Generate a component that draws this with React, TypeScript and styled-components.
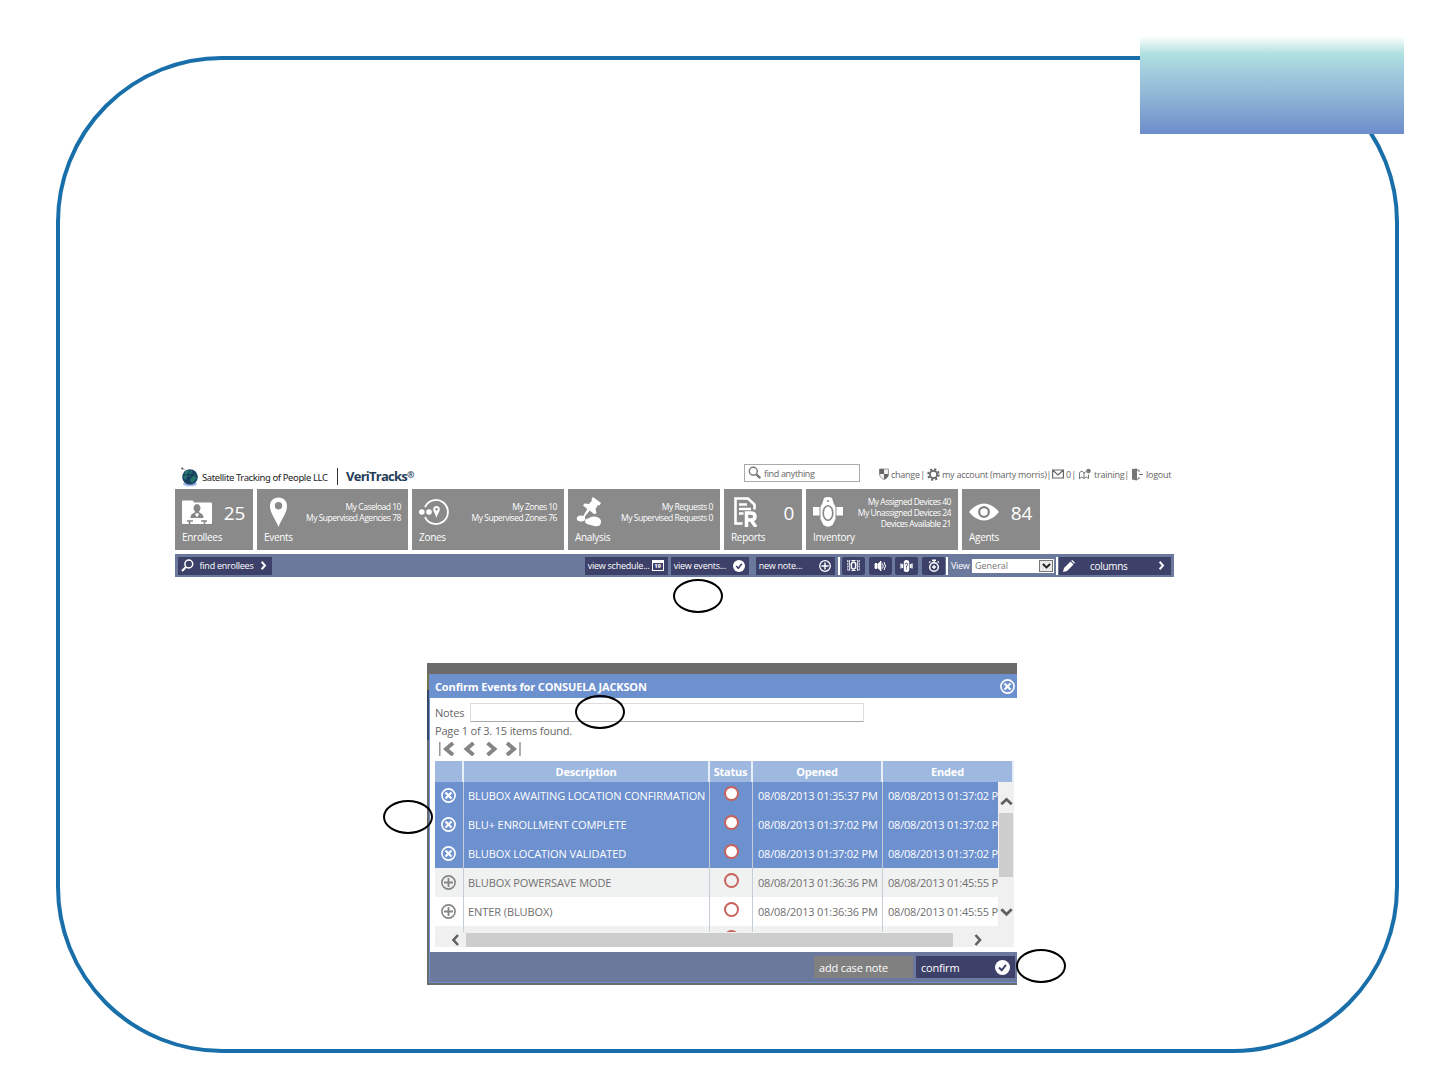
import React from "react";
import styled, { createGlobalStyle } from "styled-components";

const events = [
  { name: "BLUBOX AWAITING LOCATION CONFIRMATION", opened: "08/08/2013 01:35:37 PM", ended: "08/08/2013 01:37:02 PM", selected: true },
  { name: "BLU+ ENROLLMENT COMPLETE", opened: "08/08/2013 01:37:02 PM", ended: "08/08/2013 01:37:02 PM", selected: true },
  { name: "BLUBOX LOCATION VALIDATED", opened: "08/08/2013 01:37:02 PM", ended: "08/08/2013 01:37:02 PM", selected: true },
  { name: "BLUBOX POWERSAVE MODE", opened: "08/08/2013 01:36:36 PM", ended: "08/08/2013 01:45:55 PM", selected: false },
  { name: "ENTER (BLUBOX)", opened: "08/08/2013 01:36:36 PM", ended: "08/08/2013 01:45:55 PM", selected: false },
  { name: "", opened: "", ended: "", selected: false },
];

const tiles = [
  { label: "Enrollees", width: 78, icon: <FolderIcon />, count: "25" },
  { label: "Events", width: 151, icon: <PinIcon />, lines: ["My Caseload 10", "My Supervised Agencies 78"] },
  { label: "Zones", width: 152, icon: <ZoneIcon />, lines: ["My Zones 10", "My Supervised Zones 76"] },
  { label: "Analysis", width: 152, icon: <PushpinIcon />, lines: ["My Requests 0", "My Supervised Requests 0"] },
  { label: "Reports", width: 78, icon: <ReportIcon />, count: "0" },
  { label: "Inventory", width: 152, icon: <DeviceIcon />, lines: ["My Assigned Devices 40", "My Unassigned Devices 24", "Devices Available 21"] },
  { label: "Agents", width: 78, icon: <EyeIcon />, count: "84" },
];

export default function App() {
  return (
    <Page>
      <GlobalStyle />
      <Frame>
        <Dashboard>
          <TopBar />
          <Tiles>
            {tiles.map((t) => (
              <Tile key={t.label} $width={t.width}>
                <TileTop>
                  {t.icon}
                  {t.count && <Count>{t.count}</Count>}
                  {t.lines && (
                    <Lines $three={t.lines.length === 3}>
                      {t.lines.map((l) => <span key={l}>{l}</span>)}
                    </Lines>
                  )}
                </TileTop>
                <TileLabel>{t.label}</TileLabel>
              </Tile>
            ))}
          </Tiles>
          <ActionBar />
        </Dashboard>
        <ConfirmDialog />
      </Frame>
      <Banner />
      <Callout $x={673} $y={579} />
      <Callout $x={575} $y={695} />
      <Callout $x={383} $y={800} />
      <Callout $x={1016} $y={949} />
    </Page>
  );
}

function TopBar() {
  return (
    <Header>
      <GlobeIcon />
      <Company>Satellite Tracking of People LLC</Company>
      <Brand>VeriTracks<sup>®</sup></Brand>
      <SearchBox>
        <svg width="14" height="14" viewBox="0 0 14 14" fill="none" stroke="#777">
          <circle cx="5.3" cy="5.3" r="4" strokeWidth="1.4" />
          <path d="M8.3 8.3l4 3.8" strokeWidth="2.3" />
        </svg>
        find anything
      </SearchBox>
      <Account>
        <svg width="10" height="12" viewBox="0 0 10 12">
          <path d="M.5 1h9v5c0 3-2 4.500-4.500 5.500C2.500 10.500.5 9 .5 6z" fill="#eee" stroke="#888" strokeWidth=".8" />
          <path d="M.5 1H5v5H.5zM5 6h4.500c0 3-2 4.500-4.500 5.500z" fill="#666" />
        </svg>
        <Item $width={34}><span>change</span><span>|</span></Item>
        <svg width="13" height="13" viewBox="0 0 14 14" fill="none" stroke="#666">
          <circle cx="7" cy="7" r="3.900" strokeWidth="2" />
          <circle cx="7" cy="7" r="5.800" strokeWidth="1.900" strokeDasharray="2.400 2.155" />
        </svg>
        <Item $width={108}><span>my account (marty morris)</span><span>|</span></Item>
        <svg width="12" height="10" viewBox="0 0 12 10" fill="none" stroke="#666" strokeWidth="1.200">
          <path d="M.6 1h10.800v8H.6zM.8 1.200L6 6l5.200-4.800" />
        </svg>
        <Item $width={10}><span>0</span><span>|</span></Item>
        <svg width="14" height="12" viewBox="0 0 14 12" fill="none" stroke="#777">
          <path d="M1.500 11V4.500L4 3l2 2v5.500M1.500 10.500L4 9l2 1.500L8.500 9l2 1.500V6.500M6 5l2-1.500" />
          <circle cx="10.500" cy="3" r="2.300" fill="#777" stroke="none" />
        </svg>
        <Item $width={35}><span>training</span><span>|</span></Item>
        <svg width="13" height="13" viewBox="0 0 13 13">
          <path d="M1 1l5-.5v12L1 11.500z" fill="#777" />
          <path d="M6 2h2v2M8 9v2H6M8 6.500h4" fill="none" stroke="#777" />
        </svg>
        <Item $width={26}>logout</Item>
      </Account>
    </Header>
  );
}

function ActionBar() {
  return (
    <Bar>
      <BarButton $width={94} $gap={0}>
        <svg width="13" height="13" viewBox="0 0 13 13" fill="none" stroke="#fff">
          <circle cx="7.800" cy="5" r="3.900" strokeWidth="1.500" />
          <path d="M5 8l-4 4" strokeWidth="2.200" />
        </svg>
        <ButtonText>find enrollees</ButtonText>
        <Chevron dir="right" size={9} color="#fff" />
      </BarButton>
      <Spacer />
      <BarButton $width={83} $gap={3}>
        <ButtonText>view schedule...</ButtonText>
        <Calendar>19</Calendar>
      </BarButton>
      <BarButton $width={78} $gap={7}>
        <ButtonText>view events...</ButtonText>
        <CheckIcon size={12} />
      </BarButton>
      <BarButton $width={79} $gap={3}>
        <ButtonText>new note...</ButtonText>
        <CircleIcon kind="plus" size={12} color="#fff" />
      </BarButton>
      <Divider />
      <SquareButton>
        <svg width="13" height="13" viewBox="0 0 13 13" fill="none" stroke="#fff">
          <ellipse cx="6.500" cy="6.500" rx="2.200" ry="3.500" strokeWidth="1.400" />
          <path d="M4.500 1.500h4M4.500 11.500h4M3 1L2 3l1 2-1 2 1 2-1 3M10 1l1 2-1 2 1 2-1 2 1 3" />
          <path d="M.8 1v11M12.200 1v11" strokeDasharray="2 .8" />
        </svg>
      </SquareButton>
      <SquareButton>
        <svg width="13" height="12" viewBox="0 0 13 12" fill="none" stroke="#fff">
          <path d="M1 3.500h2v5H1zM4 4l3-3v10L4 8z" fill="#fff" strokeWidth=".8" />
          <path d="M8.500 3.500q1.500 2.500 0 5M10 2q3 4 0 8" />
        </svg>
      </SquareButton>
      <SquareButton>
        <svg width="13" height="14" viewBox="0 0 13 14" fill="none" stroke="#fff">
          <rect x="3.800" y="1" width="5.400" height="12" rx="2.500" fill="#fff" stroke="none" />
          <path d="M1 4.500v5M2.500 5v4M10.500 5v4M12 4.500v5" strokeWidth="1.300" />
          <path d="M5.300 5.500q0-1.300 1.200-1.300T7.700 5.500Q7.700 6.500 6.500 7v1.500M6.500 9.500v1" stroke="#3d4169" />
        </svg>
      </SquareButton>
      <SquareButton>
        <svg width="12" height="14" viewBox="0 0 12 14" fill="none" stroke="#fff">
          <circle cx="6" cy="8" r="4.300" strokeWidth="1.500" />
          <path d="M4 1.200h4M6 1v3M1 3.500l1.500-1M11 3.500l-1.500-1M6 6v4M4 8h4" strokeWidth="1.400" />
        </svg>
      </SquareButton>
      <Divider />
      <ViewLabel>View</ViewLabel>
      <Select>
        General
        <SelectArrow><Chevron dir="down" size={9} color="#222" /></SelectArrow>
      </Select>
      <Divider />
      <Columns>
        <svg width="12" height="12" viewBox="0 0 12 12" fill="#fff">
          <path d="M0 12l1-4 6.500-6.500 3 3L4 11zM8.200.8L9.200 0l2.800 2.800-.8 1z" />
        </svg>
        <span>columns</span>
        <Chevron dir="right" size={9} color="#fff" />
      </Columns>
    </Bar>
  );
}

function ConfirmDialog() {
  return (
    <Dialog>
      <EdgeStrip />
      <DialogBody>
        <TitleBar>
          Confirm Events for CONSUELA JACKSON
          <CircleIcon kind="close" size={15} color="#fff" />
        </TitleBar>
        <NotesRow>
          <span>Notes</span>
          <NotesInput />
        </NotesRow>
        <PageInfo>Page 1 of 3. 15 items found.</PageInfo>
        <Pager>
          <PagerIcon d="M.8 0v14M14 1L7 7l7 6" />
          <PagerIcon d="M12.500 1l-7 6 7 6" />
          <PagerIcon d="M4.500 1l7 6-7 6" />
          <PagerIcon d="M2 1l7 6-7 6M15 0v14" />
        </Pager>
        <Table>
          <HeadRow>
            <HeadCell />
            <HeadCell>Description</HeadCell>
            <HeadCell>Status</HeadCell>
            <HeadCell>Opened</HeadCell>
            <HeadCell>Ended</HeadCell>
          </HeadRow>
          <Scroller>
            <Rows>
              {events.map((e, i) => (
                <Row key={i} $selected={e.selected} $odd={i % 2 === 1}>
                  <Cell $center>
                    {e.name && <CircleIcon kind={e.selected ? "close" : "plus"} size={15} color={e.selected ? "#fff" : "#858585"} />}
                  </Cell>
                  <Cell>{e.name}</Cell>
                  <Cell $center><Status $filled={e.selected} /></Cell>
                  <Cell $date>{e.opened}</Cell>
                  <Cell $date>{e.ended}</Cell>
                </Row>
              ))}
            </Rows>
            <VScroll>
              <Chevron dir="up" size={13} color="#606060" />
              <VThumb />
              <Chevron dir="down" size={13} color="#606060" />
            </VScroll>
          </Scroller>
          <HScroll>
            <Chevron dir="left" size={12} color="#606060" />
            <HThumb />
            <Chevron dir="right" size={12} color="#606060" />
          </HScroll>
        </Table>
        <Footer>
          <FooterButton $grey>add case note</FooterButton>
          <FooterButton>confirm<CheckIcon size={15} /></FooterButton>
        </Footer>
      </DialogBody>
    </Dialog>
  );
}

function Chevron({ dir, size, color }: { dir: "left" | "right" | "up" | "down"; size: number; color: string }) {
  const paths = {
    left: "M9 1L4.500 6 9 11",
    right: "M3.500 1L8 6l-4.500 5",
    up: "M1.200 8.500L6 4l4.800 4.500",
    down: "M1.200 4L6 8.500 10.800 4",
  };
  return (
    <svg width={size} height={size} viewBox="0 0 12 12" fill="none" stroke={color} strokeWidth="2.600">
      <path d={paths[dir]} />
    </svg>
  );
}

function CircleIcon({ kind, size, color }: { kind: "close" | "plus"; size: number; color: string }) {
  return (
    <svg width={size} height={size} viewBox="0 0 15 15" fill="none" stroke={color}>
      <circle cx="7.500" cy="7.500" r="6.600" strokeWidth="1.600" />
      {kind === "close"
        ? <path d="M4.500 4.500l6 6M10.500 4.500l-6 6" strokeWidth="2.200" />
        : <path d="M7.500 3v9M3 7.500h9" strokeWidth="1.800" />}
    </svg>
  );
}

function CheckIcon({ size }: { size: number }) {
  return (
    <svg width={size} height={size} viewBox="0 0 15 15" fill="none">
      <circle cx="7.500" cy="7.500" r="7.500" fill="#fff" />
      <path d="M4 7.500l2.700 2.800L11 4.800" stroke="#3d4169" strokeWidth="2" />
    </svg>
  );
}

function PagerIcon({ d }: { d: string }) {
  return (
    <svg width="16" height="14" viewBox="0 0 16 14" fill="none" stroke="#858585">
      {d.split("M").filter(Boolean).map((p) => (
        <path key={p} d={"M" + p} strokeWidth={p.includes("v") ? 1.3 : 3.9} />
      ))}
    </svg>
  );
}

function GlobeIcon() {
  return (
    <svg width="18" height="20" viewBox="0 0 18 20">
      <ellipse cx="9" cy="17" rx="7" ry="2.300" fill="#a5bcec" />
      <circle cx="9" cy="10" r="7.800" fill="#1d4664" />
      <path d="M5 4q4-2 6 0l-1 4-3 1-3 4-2-4zM11 9l4-2v5l-4 4-2-3z" fill="#25756b" />
      <path d="M2 9q7-4 14 1M9 3q-4 7 0 14M4 14q6-1 10-9" stroke="#153859" fill="none" />
      <circle cx="1.300" cy="1.500" r="1" fill="#345" />
      <path d="M2 2l4 2" stroke="#789" strokeWidth=".6" />
    </svg>
  );
}

function FolderIcon() {
  return (
    <svg width="30" height="30" viewBox="0 0 30 30" fill="#fff">
      <path d="M0 4.500q0-1 1-1h9q1 0 1.500 1l.5 1h17q1 0 1 1V26q0 1-1 1H1q-1 0-1-1z" />
      <path d="M15 7a3.600 4 0 0 1 2 7.200l.5 1.500q4 .8 4 5.300h-13q0-4.500 4-5.300l.5-1.500A3.600 4 0 0 1 15 7z" fill="#858585" />
      <path d="M15 16l-2 1 2 3.500 2-3.500z" />
      <path d="M5 24h6M19 24h6M7.500 24v3M22.500 24v3" stroke="#858585" strokeWidth="1.600" />
    </svg>
  );
}

function PinIcon() {
  return (
    <svg width="30" height="30" viewBox="0 0 30 30" fill="#fff">
      <path fillRule="evenodd" d="M14.500.5c5 0 8.500 3.500 8.500 8.500 0 7-5 12-8.500 21C11 21 6 16 6 9 6 4 9.500.5 14.500.5zm0 4.500a3.700 3.700 0 1 0 0 7.400 3.700 3.700 0 0 0 0-7.400z" />
    </svg>
  );
}

function ZoneIcon() {
  return (
    <svg width="30" height="30" viewBox="0 0 30 30" fill="#fff">
      <path d="M6 10A12 12 0 1 1 6 20" fill="none" stroke="#fff" strokeWidth="1.800" />
      <circle cx="2.800" cy="15" r="2.800" />
      <circle cx="10" cy="15" r="2.800" />
      <path fillRule="evenodd" d="M17.500 9c2 0 3.300 1.500 3.300 3.300 0 2.700-2.300 4.500-3.300 8.700-1-4.200-3.300-6-3.300-8.700 0-1.800 1.300-3.300 3.300-3.300zm0 2a1.300 1.300 0 1 0 0 2.600 1.300 1.300 0 0 0 0-2.600z" />
    </svg>
  );
}

function PushpinIcon() {
  return (
    <svg width="30" height="30" viewBox="0 0 30 30" fill="#fff">
      <path d="M18 0l8 6-1.500 2.500-1.500-.5-2.500 4 1 4.500-2.500.5-4.300-3.500L8 22l-1-.7 5.300-9.300L8 8.500 9.500 6.500l4.500.5 3-3.500-.5-1.500z" />
      <ellipse cx="6" cy="21.500" rx="4.200" ry="3" />
      <path d="M10 23.500q0-1.700 3-2 4-2.700 8-1.700 5 1 5 5 0 5-6 4.500l-7-2q-3-.5-3-3.800z" />
    </svg>
  );
}

function ReportIcon() {
  return (
    <svg width="30" height="30" viewBox="0 0 30 30" fill="none" stroke="#fff">
      <path d="M11.500 26.500H4.500v-25H17l6.500 6v5" strokeWidth="2.600" />
      <path d="M8 7.500h8M8 12h12M8 16.500h4.500" strokeWidth="2.400" />
      <path d="M15.500 30V16h4q4.500 0 4.500 3.500T19.500 23h-4M20 23l5 7" strokeWidth="3.500" />
    </svg>
  );
}

function DeviceIcon() {
  return (
    <svg width="30" height="30" viewBox="0 0 30 30" fill="#fff">
      <path d="M0 10h6.500v8.500H0zM23.500 10H30v8.500h-6.500z" />
      <path d="M11 1q4-2 8 0l1.500 5 2 4v12l-3 6q-4.500 3.500-9 0l-3-6V10l2-4z" />
      <ellipse cx="15" cy="16" rx="4.800" ry="7.300" fill="none" stroke="#858585" strokeWidth="1.600" />
      <circle cx="15" cy="4" r="1" fill="#858585" />
    </svg>
  );
}

function EyeIcon() {
  return (
    <svg width="30" height="30" viewBox="0 0 30 30">
      <path d="M0 15Q7 6.500 15 6.500T30 15q-7 8.500-15 8.500T0 15z" fill="#fff" />
      <circle cx="15" cy="15" r="4.800" fill="#fff" stroke="#858585" strokeWidth="2.300" />
    </svg>
  );
}

const GlobalStyle = createGlobalStyle`
  *{
    box-sizing: border-box;
  }
  body{
    margin: 0;
    background: #fff;
    font-family: "Open Sans", "Noto Sans", sans-serif;
  }
  svg{
    display: block;
    flex-shrink: 0;
  }
`;

const Page = styled.div`
  position: relative;
  width: 1440px;
  height: 1080px;
  padding: 56px 0 0 56px;
  overflow: hidden;
`;

const Frame = styled.main`
  width: 1343px;
  height: 997px;
  border: 4px solid #196fa9;
  border-radius: 166px;
  padding: 398px 0 0 115px;
`;

const Banner = styled.div`
  position: absolute;
  left: 1140px;
  top: 36px;
  width: 264px;
  height: 98px;
  background: linear-gradient(#fff 0%, #b0e0e0 18%, #a0cbdc 38%, #8fb5d6 62%, #6e8fcb 98%);
`;

const Callout = styled.div<{ $x: number; $y: number }>`
  position: absolute;
  left: ${(p) => p.$x}px;
  top: ${(p) => p.$y}px;
  width: 50px;
  height: 34px;
  border: 2px solid #000;
  border-radius: 50%;
`;

const Dashboard = styled.section`
  width: 999px;
`;

const Header = styled.header`
  display: flex;
  height: 27px;
  padding-left: 6px;
  align-items: center;
  margin-bottom: 4px;

  > *{
    flex-shrink: 0;
  }
  > svg{
    margin-top: 11px;
  }
`;

const Company = styled.div`
  width: 135px;
  margin: 11px 0 0 3px;
  font: 9.5px/17px "Noto Sans", sans-serif;
  letter-spacing: -0.4px;
  color: #222;
  white-space: nowrap;
`;

const Brand = styled.div`
  width: 78px;
  height: 17px;
  margin-top: 10px;
  padding-left: 8px;
  border-left: 1px solid #333;
  font-size: 13px;
  font-weight: 700;
  line-height: 17px;
  letter-spacing: -0.75px;
  color: #233c58;
  white-space: nowrap;

  sup{
    font-size: 9px;
    line-height: 0;
    vertical-align: 3px;
  }
`;

const SearchBox = styled.div`
  display: flex;
  align-items: center;
  gap: 2px;
  width: 116px;
  height: 18px;
  margin: 3px 19px 0 329px;
  padding-left: 3px;
  border: 1px solid #aaa;
  font-size: 9px;
  letter-spacing: -0.35px;
  color: #666;
`;

const Account = styled.nav`
  display: flex;
  align-items: center;
  gap: 2px;
  margin-top: 5px;
`;

const Item = styled.span<{ $width: number }>`
  display: flex;
  justify-content: space-between;
  width: ${(p) => p.$width}px;
  font-size: 9px;
  letter-spacing: -0.25px;
  color: #666;
  white-space: nowrap;
`;

const Tiles = styled.div`
  display: flex;
  gap: 4px;
  margin-bottom: 4px;
`;

const Tile = styled.div<{ $width: number }>`
  width: ${(p) => p.$width}px;
  height: 61px;
  padding: 8px 7px 0;
  background: #8a8a8a;
  color: #fff;
`;

const TileTop = styled.div`
  display: flex;
  justify-content: space-between;
  height: 31px;
`;

const Count = styled.div`
  margin-right: 1px;
  font-size: 19px;
  line-height: 32px;
  letter-spacing: -0.3px;
`;

const Lines = styled.div<{ $three: boolean }>`
  display: flex;
  flex-direction: column;
  margin-top: ${(p) => (p.$three ? -1 : 4)}px;
  font-size: 8.5px;
  line-height: 11px;
  letter-spacing: -0.48px;
  text-align: right;
  white-space: nowrap;
`;

const TileLabel = styled.div`
  font-size: 10px;
  line-height: 19px;
  letter-spacing: -0.3px;
`;

const Bar = styled.div`
  display: flex;
  align-items: center;
  height: 23px;
  padding: 0 3px;
  background: #6b799d;
`;

const BarButton = styled.button<{ $width: number; $gap: number }>`
  display: flex;
  align-items: center;
  justify-content: space-between;
  width: ${(p) => p.$width}px;
  height: 18px;
  margin-right: ${(p) => p.$gap}px;
  padding: 0 4px 0 3px;
  border: 0;
  background: #3d4169;
  color: #fff;
  font-family: inherit;
`;

const ButtonText = styled.span`
  font-size: 9px;
  letter-spacing: -0.24px;
  white-space: nowrap;
`;

const Spacer = styled.div`
  flex: 1;
`;

const Calendar = styled.span`
  width: 12px;
  height: 11px;
  border: 1px solid #fff;
  border-top-width: 3px;
  font-size: 6px;
  font-weight: 700;
  line-height: 7px;
`;

const Divider = styled.div`
  width: 2px;
  height: 18px;
  background: #fff;
`;

const SquareButton = styled.button`
  display: flex;
  align-items: center;
  justify-content: center;
  width: 23px;
  height: 18px;
  margin: 0 1px 0 2.6px;
  padding: 0;
  border: 0;
  border-radius: 2px;
  background: #3d4169;
`;

const ViewLabel = styled.span`
  width: 21px;
  margin-left: 3px;
  color: #fff;
  font-size: 9px;
  letter-spacing: -0.3px;
`;

const Select = styled.div`
  display: flex;
  align-items: center;
  justify-content: space-between;
  width: 82px;
  height: 14px;
  margin-right: 2px;
  padding: 0 1px 0 3px;
  background: #fff;
  color: #777;
  font-size: 9px;
`;

const SelectArrow = styled.span`
  display: flex;
  align-items: center;
  justify-content: center;
  width: 14px;
  height: 12px;
  border: 1px solid #777;
  background: #e8e8e8;
`;

const Columns = styled.div`
  display: flex;
  align-items: center;
  width: 112px;
  height: 18px;
  margin-left: 1px;
  padding: 0 5px 0 4px;
  background: #3d4169;
  color: #fff;
  font-size: 10px;
  letter-spacing: -0.3px;

  span{
    margin: 0 auto 0 15px;
  }
`;

const Dialog = styled.section`
  display: flex;
  width: 590px;
  height: 322px;
  margin: 86px 0 0 252px;
  padding: 11px 0 2px;
  background: #6b6b6b;
`;

const EdgeStrip = styled.div`
  width: 2px;
  background: linear-gradient(#74754a 0 16px, #394865 16px 66px, #6b6b6b 66px);
`;

const DialogBody = styled.div`
  flex: 1;
  min-width: 0;
  border-left: 1px solid #6d90ce;
  border-bottom: 1px solid #6d90ce;
  background: #fff;
  color: #666;
  font-size: 11px;
`;

const TitleBar = styled.div`
  display: flex;
  align-items: center;
  justify-content: space-between;
  height: 24px;
  padding: 1px 2px 0 5px;
  background: #6d90ce;
  color: #fff;
  font-size: 11px;
  font-weight: 700;
  letter-spacing: -0.14px;
`;

const NotesRow = styled.label`
  display: flex;
  align-items: center;
  height: 19px;
  margin: 5px 0 0 5px;

  span{
    width: 35px;
    letter-spacing: -0.2px;
  }
`;

const NotesInput = styled.input`
  width: 394px;
  height: 19px;
  border: 1px solid #ddd;
  border-bottom-color: #aaa;
  outline: none;
`;

const PageInfo = styled.div`
  margin-left: 5px;
  line-height: 17px;
  letter-spacing: -0.18px;
`;

const Pager = styled.div`
  display: flex;
  gap: 6px;
  margin: 3px 0 5px 9px;
`;

const Table = styled.div`
  width: 579px;
  margin-left: 5px;
`;

const columns = "29px 246px 43px 130px 131px";

const HeadRow = styled.div`
  display: grid;
  grid-template-columns: ${columns};
  height: 21px;
  background: #9fb8df;
`;

const HeadCell = styled.div`
  border-right: 2px solid #e8eef8;
  color: #fff;
  font-size: 11px;
  font-weight: 700;
  line-height: 21px;
  letter-spacing: -0.2px;
  text-align: center;
`;

const Scroller = styled.div`
  display: flex;
  height: 150px;
`;

const Rows = styled.div`
  width: 563px;
  overflow: hidden;
`;

const Row = styled.div<{ $selected: boolean; $odd: boolean }>`
  display: grid;
  grid-template-columns: ${columns};
  width: 579px;
  height: 28.8px;
  background: ${(p) => (p.$selected ? "#6d90ce" : p.$odd ? "#f0f1f1" : "#fff")};
  color: ${(p) => (p.$selected ? "#fff" : "#707070")};
`;

const Cell = styled.div<{ $center?: boolean; $date?: boolean }>`
  display: flex;
  align-items: center;
  justify-content: ${(p) => (p.$center ? "center" : "flex-start")};
  padding: 0 ${(p) => (p.$center ? 1 : 0)}px 1px ${(p) => (p.$center ? 0 : p.$date ? 5 : 4)}px;
  border-right: 1px solid #c5ced6;
  font-size: 11px;
  letter-spacing: ${(p) => (p.$date ? "-0.2px" : "-0.08px")};
  white-space: nowrap;
`;

const Status = styled.span<{ $filled: boolean }>`
  width: 15px;
  height: 15px;
  margin: 0 0 4px 1px;
  border: 2px solid #c8625a;
  border-radius: 50%;
  background: ${(p) => (p.$filled ? "#fff" : "transparent")};
`;

const VScroll = styled.div`
  display: flex;
  flex-direction: column;
  align-items: center;
  width: 16px;
  padding-top: 13px;
  background: #f0f0f0;
`;

const VThumb = styled.div`
  width: 14px;
  height: 64px;
  margin: 5px 0 28px;
  background: #cdcdcd;
`;

const HScroll = styled.div`
  display: flex;
  align-items: center;
  height: 15px;
  padding-left: 14px;
  background: #f0f0f0;
`;

const HThumb = styled.div`
  width: 487px;
  height: 14px;
  margin: 0 19px 0 5px;
  background: #cdcdcd;
`;

const Footer = styled.div`
  display: flex;
  align-items: center;
  justify-content: flex-end;
  gap: 3px;
  height: 30px;
  margin-top: 5px;
  padding-right: 2px;
  background: #6b799d;
`;

const FooterButton = styled.button<{ $grey?: boolean }>`
  display: flex;
  align-items: center;
  justify-content: space-between;
  width: 99px;
  height: 22px;
  padding: 0 5px;
  border: 0;
  background: ${(p) => (p.$grey ? "#808080" : "#3d4169")};
  color: #fff;
  font-family: inherit;
  font-size: 11px;
  letter-spacing: -0.2px;
`;
